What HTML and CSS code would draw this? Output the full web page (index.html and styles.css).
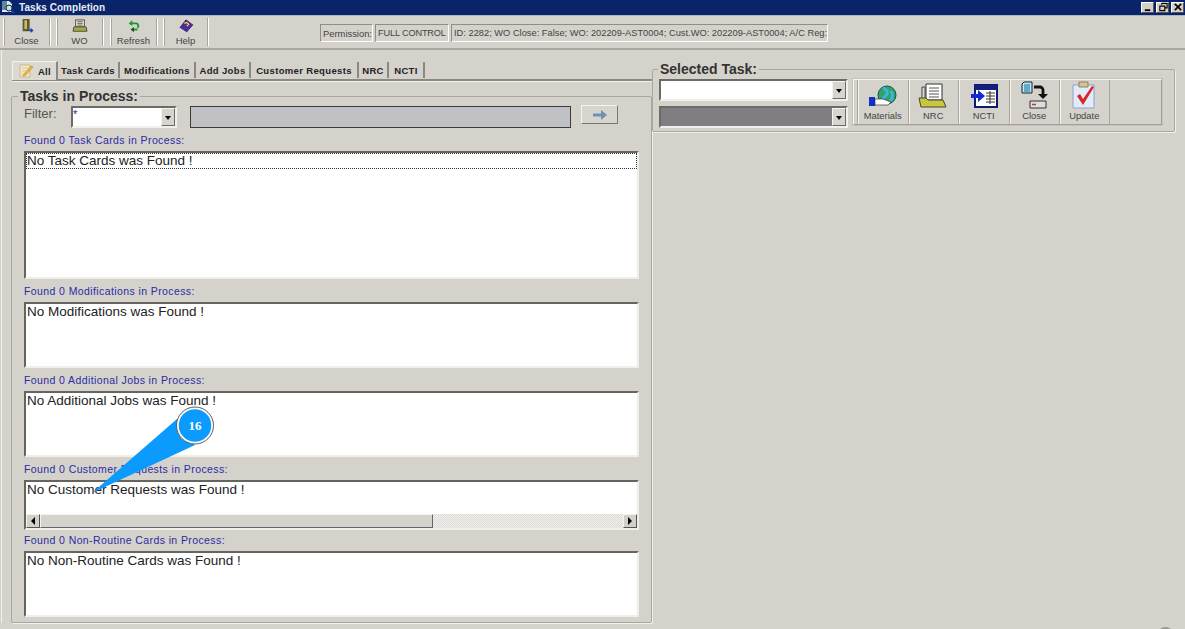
FILE: index.html
```html
<!DOCTYPE html>
<html lang="en">
<head>
<meta charset="utf-8">
<title>Tasks Completion</title>
<link rel="stylesheet" href="styles.css">
</head>
<body>
<div class="window">
  <header class="titlebar">
    <svg class="app-icon" width="14" height="14" viewBox="0 0 14 14"><path d="M1 1h7l3 3v8H1z" fill="#dfe8ee"/><path d="M1 1h5v9H1z" fill="#5b8a9e"/><circle cx="8" cy="8" r="3" fill="#bfe0f0" stroke="#223"/><path d="M10 10l3 3" stroke="#1a3fa0" stroke-width="2"/></svg>
    <span class="title">Tasks Completion</span>
    <div class="win-btns">
      <span class="win-btn"><svg width="12" height="10" viewBox="0 0 13 11"><path d="M3 8h6v2H3z" fill="#000"/></svg></span>
      <span class="win-btn"><svg width="12" height="10" viewBox="0 0 13 11"><path d="M5 1.500h6v5H9M5 1.500V3M3 4.500h5.500v5H3z" fill="none" stroke="#000" stroke-width="1.200"/></svg></span>
      <span class="win-btn"><svg width="12" height="10" viewBox="0 0 13 11"><path d="M3 2l7 7M10 2l-7 7" stroke="#000" stroke-width="1.800"/></svg></span>
    </div>
  </header>

  <nav class="toolbar">
    <button class="tool tool-close">
      <svg width="18" height="16" viewBox="0 0 18 16"><path d="M4 0h8v14H4z" fill="#5e5730"/><path d="M6 1.500h3v10H6z" fill="#c9bd6a"/><path d="M10 13h5M13 11l2.500 2-2.500 2" stroke="#1f49a8" stroke-width="1.500" fill="none"/></svg>
      <span>Close</span>
    </button>
    <button class="tool tool-wo">
      <svg width="18" height="16" viewBox="0 0 18 16"><path d="M4 1h10v8H4z" fill="#e8e6dd" stroke="#444"/><path d="M6 3h6M6 5h6M6 7h6" stroke="#555"/><path d="M2 9h14l1 5H1z" fill="#a9a63e" stroke="#444"/></svg>
      <span>WO</span>
    </button>
    <button class="tool tool-refresh">
      <svg width="18" height="16" viewBox="0 0 18 16"><path d="M5 5h7a3 3 0 0 1 1 5" fill="none" stroke="#1c9a2c" stroke-width="2.200"/><path d="M7 1L3 5l4 3z" fill="#1c9a2c"/><path d="M13 12H7" stroke="#1c9a2c" stroke-width="2.200"/><path d="M9 9v6l-4-3z" fill="#0d5d18"/></svg>
      <span>Refresh</span>
    </button>
    <button class="tool tool-help">
      <svg width="18" height="16" viewBox="0 0 18 16"><path d="M9 1l8 6-7 8-8-5z" fill="#4a2c9c" stroke="#221255"/><path d="M2 10l8 5 7-8v2l-7 7-8-5z" fill="#d8d4e8"/><path d="M7 5l3-1 2 2-2 2" fill="none" stroke="#f1d64a" stroke-width="1.500"/></svg>
      <span>Help</span>
    </button>
    <div class="status">
      <span class="cell cell-perm">Permission:</span>
      <span class="cell cell-full">FULL CONTROL</span>
      <span class="cell cell-info">ID: 2282; WO Close: False; WO: 202209-AST0004; Cust.WO: 202209-AST0004; A/C Reg:</span>
    </div>
  </nav>

  <main class="main">
    <section class="left">
      <div class="tabs">
        <span class="tab tab-active">
          <svg width="16" height="16" viewBox="0 0 16 16"><path d="M2 2h10v12H2z" fill="#f6e7c4" stroke="#c9b78c"/><path d="M4 5h6M4 8h6M4 11h4" stroke="#d9c9a3"/><path d="M6 11l7-8 2 1-7 8-3 1z" fill="#e9b83f" stroke="#a7812a" stroke-width=".5"/></svg>
          All
        </span>
        <span class="tab tab-tc">Task Cards</span>
        <span class="tab tab-mod">Modifications</span>
        <span class="tab tab-add">Add Jobs</span>
        <span class="tab tab-cr">Customer Requests</span>
        <span class="tab tab-nrc">NRC</span>
        <span class="tab tab-ncti">NCTI</span>
      </div>

      <fieldset class="group group-left">
        <legend>Tasks in Process:</legend>
        <div class="filter">
          <span class="filter-label">Filter:</span>
          <div class="combo combo-filter"><span class="star">*</span><span class="drop"></span></div>
          <div class="readonly"></div>
          <button class="go"><svg width="16" height="10" viewBox="0 0 16 10"><path d="M1 3.500h8V0l6 5-6 5V6.500H1z" fill="#6f8fb5"/></svg></button>
        </div>

        <div class="lbl">Found 0 Task Cards in Process:</div>
        <div class="list list-tc"><div class="row row-focus">No Task Cards was Found !</div></div>

        <div class="lbl">Found 0 Modifications in Process:</div>
        <div class="list list-std"><div class="row">No Modifications was Found !</div></div>

        <div class="lbl">Found 0 Additional Jobs in Process:</div>
        <div class="list list-std"><div class="row">No Additional Jobs was Found !</div></div>

        <div class="lbl">Found 0 Customer Requests in Process:</div>
        <div class="list list-scroll">
          <div class="row">No Customer Requests was Found !</div>
          <div class="hscroll">
            <span class="sbtn"><i class="tri-left"></i></span>
            <span class="thumb"></span>
            <span class="track"></span>
            <span class="sbtn"><i class="tri-right"></i></span>
          </div>
        </div>

        <div class="lbl lbl-tight">Found 0 Non-Routine Cards in Process:</div>
        <div class="list list-std"><div class="row">No Non-Routine Cards was Found !</div></div>
      </fieldset>
    </section>

    <section class="right">
      <fieldset class="group group-right">
        <legend>Selected Task:</legend>
        <div class="sel-wrap">
          <div class="combos">
            <div class="combo combo-sel"><span class="drop"></span></div>
            <div class="combo combo-sel combo-dis"><span class="drop"></span></div>
          </div>
          <div class="actions">
            <button class="act">
              <svg width="30" height="24" viewBox="0 0 30 24"><circle cx="19" cy="10" r="9" fill="#2fa36a" stroke="#14553a"/><path d="M15 3c3 1 5 3 4 6s-4 2-4 6M23 6c2 3 2 8-1 10" stroke="#3fb3df" stroke-width="3" fill="none"/><path d="M1 12h6v9H1z" fill="#1230c8"/><path d="M7 14h8l8 3-3 3H7z" fill="#fff" stroke="#333" stroke-width=".7"/></svg>
              <span>Materials</span>
            </button>
            <button class="act">
              <svg width="30" height="26" viewBox="0 0 30 26"><path d="M8 1h16v16H8z" fill="#fff" stroke="#333"/><path d="M11 5h10M11 8h10M11 11h10M11 14h10" stroke="#555"/><path d="M4 4h3v13H4z" fill="#ddd" stroke="#444"/><path d="M1 15h7l2 2h15l3 7H3z" fill="#c9c73a" stroke="#444"/></svg>
              <span>NRC</span>
            </button>
            <button class="act">
              <svg width="30" height="26" viewBox="0 0 30 26"><path d="M6 2h22v22H6z" fill="#fff" stroke="#0c1a70" stroke-width="2"/><path d="M6 2h22v5H6z" fill="#12207e"/><path d="M17 10h9M17 13h9M17 16h9M17 19h9M21 8v13" stroke="#333"/><path d="M2 11h7V7l7 6-7 6v-4H2z" fill="#1228d8"/></svg>
              <span>NCTI</span>
            </button>
            <button class="act">
              <svg width="30" height="28" viewBox="0 0 30 28"><path d="M5 1h8v11H3V3z" fill="#bfe6f6" stroke="#123"/><path d="M5 4h6M5 6h6M5 8h6M5 10h6" stroke="#0a6f98"/><path d="M15 6h6a3 3 0 0 1 3 3v5" fill="none" stroke="#111" stroke-width="2.800"/><path d="M19 13h10l-5 5z" fill="#111"/><path d="M11 20h16v7H11z" fill="#ddd" stroke="#333"/><path d="M13 23.500h4" stroke="#c33" stroke-width="1.500"/></svg>
              <span>Close</span>
            </button>
            <button class="act">
              <svg width="30" height="28" viewBox="0 0 30 28"><path d="M4 4h21v23H4z" fill="#e2ebf8" stroke="#8ea4c6"/><path d="M10 1h9v5h-9z" fill="#d2c49a" stroke="#8c8060"/><path d="M8 15l3-2 3 5 9-13 2 1-11 18z" fill="#d8262a"/></svg>
              <span>Update</span>
            </button>
          </div>
        </div>
      </fieldset>
    </section>
  </main>

  <svg class="callout" width="120" height="90" viewBox="0 0 120 90">
    <path d="M88 7L106 33L3 81Z" fill="#0b9bff"/>
    <circle cx="106" cy="13.500" r="17.500" fill="#0b9bff" stroke="#fff" stroke-width="2.500"/>
    <circle cx="106" cy="13.500" r="18.500" fill="none" stroke="#333" stroke-width=".8"/>
    <text x="106" y="18" class="callout-num" text-anchor="middle">16</text>
  </svg>
  <span class="speck"></span>
</div>
</body>
</html>
```
FILE: styles.css
```css
* { box-sizing: border-box; }
html, body { margin: 0; padding: 0; }
body { font-family: "Liberation Sans", Arial, sans-serif; background: #d4d0c8; }

.window {
  position: relative;
  width: 1185px;
  height: 629px;
  overflow: hidden;
  background: #d5d2cc;
  color: #333;
}

/* title bar */
.titlebar {
  display: flex;
  align-items: center;
  height: 16px;
  padding: 0 1px 1px 1px;
  background: #0a246a;
  border-bottom: 1px solid #a9b4c8;
}
.app-icon { flex: none; }
.title {
  margin-left: 4px;
  color: #e8ecf5;
  font-size: 10px;
  font-weight: bold;
  letter-spacing: .05px;
}
.win-btns { display: flex; gap: 2px; margin-left: auto; }
.win-btn {
  display: flex;
  width: 13px;
  height: 11px;
  background: #d4d0c8;
  border: 1px solid;
  border-color: #fff #555 #555 #fff;
  align-items: center;
  justify-content: center;
}
.win-btn svg { flex: none; }

/* top toolbar */
.toolbar {
  display: flex;
  align-items: stretch;
  height: 34px;
  padding: 2px 0 2px 3px;
  border-bottom: 2px solid #a8a6a0;
}
.tool {
  display: flex;
  flex-direction: column;
  align-items: center;
  justify-content: flex-start;
  gap: 2px;
  padding: 1px 0 0;
  font: 9.500px "Liberation Sans", Arial, sans-serif;
  color: #444;
  background: none;
  border: 0;
  border-left: 1px solid #fff;
  border-right: 1px solid #a8a6a0;
  box-shadow: inset 1px 0 0 #a8a6a0, 1px 0 0 #fff;
}
.tool-close { width: 47px; }
.tool-wo { width: 47px; margin-left: 6px; }
.tool-refresh { width: 47px; margin-left: 7px; }
.tool-help { width: 45px; margin-left: 6px; }
.status {
  display: flex;
  gap: 2px;
  align-self: flex-start;
  margin-top: 6px;
  margin-left: 112px;
  height: 18px;
  font-size: 9.400px;
  color: #444;
}
.cell {
  display: block;
  padding: 3px 2px 0;
  white-space: nowrap;
  overflow: hidden;
  border: 1px solid;
  border-color: #8f8d88 #fff #fff #8f8d88;
}
.cell-perm { width: 53px; }
.cell-full { width: 74px; font-size: 9.200px; letter-spacing: -.15px; }
.cell-info { width: 377px; font-size: 9.300px; }

/* main grid */
.main {
  display: grid;
  grid-template-columns: 652px 523px;
  align-items: start;
}
.left { padding-left: 9px; border-left: 1px solid #f2f0ec; margin-left: 1px; }
.right { padding-top: 11px; }

/* tabs */
.tabs {
  display: flex;
  align-items: flex-end;
  height: 21px;
  margin-top: 10px;
  margin-left: 1px;
  border-bottom: 2px solid #8a8882;
  box-shadow: 0 1px 0 #f2f0ec;
}
.tab {
  display: flex;
  align-items: center;
  justify-content: center;
  gap: 4px;
  height: 16px;
  margin-bottom: 1px;
  font-size: 9.500px;
  font-weight: bold;
  letter-spacing: .35px;
  color: #222;
  white-space: nowrap;
  border-right: 2px solid #8a8882;
}
.tab-active {
  height: 19px;
  margin-bottom: -1px;
  background: #dcd9d2;
  border-top: 1px solid #f4f2ee;
  border-left: 1px solid #f4f2ee;
  position: relative;
  z-index: 1;
  width: 46px;
}
.tab-active svg { flex: none; }
.tab-tc { width: 62px; }
.tab-mod { width: 76px; }
.tab-add { width: 55px; }
.tab-cr { width: 108px; }
.tab-nrc { width: 30px; }
.tab-ncti { width: 36px; }

/* group boxes */
.group {
  margin: 0;
  padding: 0;
  min-width: 0;
  border: 1px solid #a8a6a0;
  box-shadow: 1px 1px 0 #f2f0ec;
  border-radius: 2px;
}
.group legend {
  padding: 0 2px;
  height: 16px;
  font-size: 14px;
  line-height: 16px;
  font-weight: bold;
  color: #333;
}
.group-left {
  width: 641px;
  height: 535px;
  margin-top: 7px;
  padding: 2px 12px 0;
}
.group-left legend { margin-left: -6px; }
.group-right {
  width: 523px;
  height: 71px;
  padding: 2px 6px 0;
}
.group-right legend { margin-left: -1px; }

/* filter row */
.filter { display: flex; align-items: flex-start; height: 22px; }
.filter-label { width: 47px; font-size: 13px; line-height: 16px; color: #555; }
.combo {
  display: flex;
  justify-content: space-between;
  height: 22px;
  background: #fff;
  border: 2px solid;
  border-color: #6d6b66 #f2f0ec #f2f0ec #6d6b66;
}
.combo-filter { width: 106px; }
.star { font-size: 11px; color: #1a2a9a; }
.drop {
  position: relative;
  width: 14px;
  height: 18px;
  margin-left: auto;
  background: #d8d5cf;
  border: 1px solid;
  border-color: #f5f4f0 #6d6b66 #6d6b66 #f5f4f0;
}
.drop::after {
  content: "";
  position: absolute;
  left: 3px;
  top: 7px;
  border: 3.500px solid transparent;
  border-top: 4px solid #000;
  border-bottom: 0;
}
.readonly {
  width: 381px;
  height: 22px;
  margin-left: 13px;
  background: #c1c0c4;
  border: 1px solid #3b3b3b;
}
.go {
  display: flex;
  align-items: center;
  justify-content: center;
  width: 37px;
  height: 19px;
  margin: -1px 0 0 10px;
  padding: 0;
  background: #d8d5cf;
  border: 1px solid;
  border-color: #f5f4f0 #777 #777 #f5f4f0;
}

/* list sections */
.lbl {
  height: 17px;
  margin-top: 6px;
  font-size: 10.500px;
  line-height: 12px;
  letter-spacing: .4px;
  color: #2b2ba3;
}
.lbl-tight { margin-top: 4px; }
.list {
  width: 615px;
  background: #fff;
  border: 2px solid;
  border-color: #66645f #f0eee9 #f0eee9 #66645f;
  overflow: hidden;
  position: relative;
}
.list-tc { height: 128px; }
.list-std { height: 66px; }
.list-scroll { height: 50px; }
.row {
  height: 16px;
  padding-left: 1px;
  font-size: 13.500px;
  line-height: 16px;
  color: #222;
  white-space: nowrap;
}
.row-focus { outline: 1px dotted #333; outline-offset: -1px; }
.hscroll {
  position: absolute;
  left: 0;
  right: 0;
  bottom: 0;
  display: flex;
  height: 14px;
}
.sbtn {
  display: flex;
  align-items: center;
  justify-content: center;
  flex: none;
  width: 14px;
  background: #d4d0c8;
  border: 1px solid;
  border-color: #f5f4f0 #555 #555 #f5f4f0;
}
.thumb {
  width: 393px;
  background: #d6d3cd;
  border: 1px solid;
  border-color: #f5f4f0 #666 #666 #f5f4f0;
}
.track {
  flex: 1;
  background-color: #ecebe6;
  background-image: repeating-conic-gradient(#dedcd6 0 25%, #f0efeb 0 50%);
  background-size: 2px 2px;
}
.tri-left, .tri-right { display: block; width: 0; height: 0; border: 4px solid transparent; }
.tri-left { border-left: 0; border-right: 4px solid #000; }
.tri-right { border-right: 0; border-left: 4px solid #000; }

/* right panel */
.sel-wrap { display: flex; gap: 5px; }
.combos { display: flex; flex-direction: column; gap: 5px; width: 189px; }
.combo-dis { background: #807e82; }
.actions {
  display: flex;
  width: 309px;
  height: 46px;
  padding-left: 3px;
  border: 1px solid;
  border-color: #f5f4f0 #a0a09a #a0a09a #f5f4f0;
  outline: 1px solid #c4c2bb;
}
.act {
  display: flex;
  flex-direction: column;
  align-items: center;
  justify-content: flex-end;
  width: 50.500px;
  padding: 0 0 3px;
  font: 9.400px "Liberation Sans", Arial, sans-serif;
  color: #444;
  background: none;
  border: 0;
  border-left: 1px solid #a8a6a0;
  box-shadow: inset 1px 0 0 #f5f4f0;
}
.act:last-child { border-right: 1px solid #a8a6a0; }
.act svg { flex: none; margin-bottom: 1px; }

/* annotation */
.callout { position: absolute; left: 89px; top: 412px; overflow: visible; }
.callout-num { font: bold 13px "Liberation Serif", serif; fill: #fff; }
.speck {
  position: absolute;
  left: 1160px;
  top: 627px;
  width: 11px;
  height: 6px;
  border-radius: 50%;
  background: #9d9b96;
}
```
